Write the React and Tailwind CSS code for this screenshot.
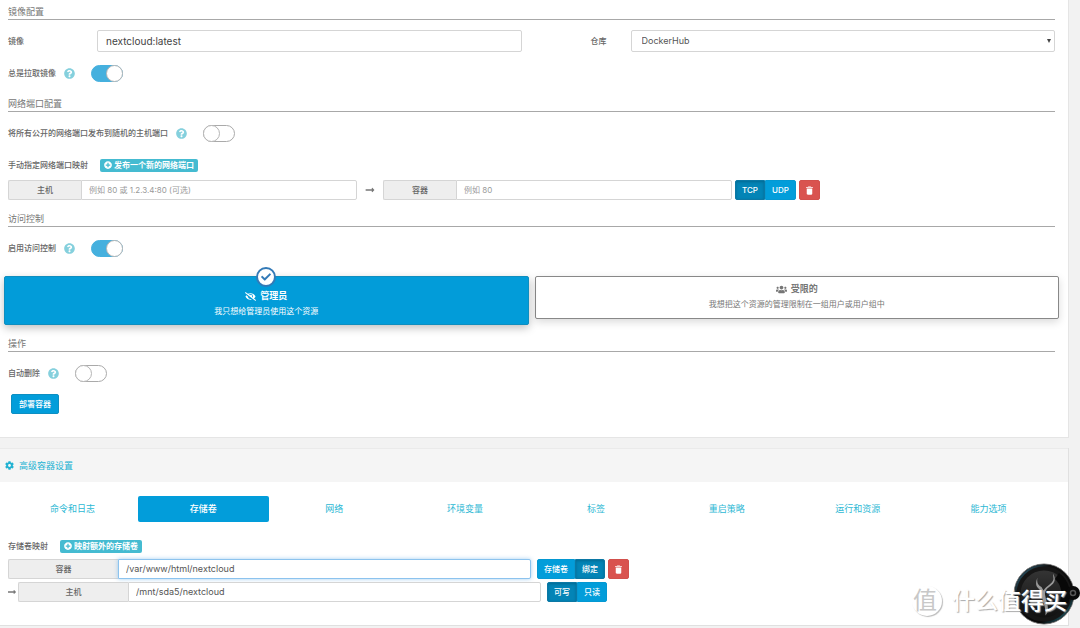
import React from "react";
import { FaCheck, FaCog, FaEyeSlash, FaLongArrowAltRight, FaPlusCircle, FaQuestionCircle, FaUsers } from "react-icons/fa";
import { IoMdTrash } from "react-icons/io";

const tabs = ["命令和日志", "存储卷", "网络", "环境变量", "标签", "重启策略", "运行和资源", "能力选项"];

const SectionTitle = ({ children, className = "" }) => (
  <h2 className={`border-b border-[#a8a8a8] pt-[5px] text-[9px] leading-[14px] text-[#767676] ${className}`}>
    {children}
  </h2>
);

const SwitchRow = ({ id, label, checked }) => (
  <div className="mt-3 flex h-[18px] items-center">
    <label htmlFor={id} className="text-[8px] font-medium text-[#666]">{label}</label>
    <FaQuestionCircle className="ml-2 h-[11px] w-[11px] text-[#85d0dd]" />
    <input
      id={id}
      type="checkbox"
      defaultChecked={checked}
      className="ml-4 flex h-[17px] w-8 appearance-none rounded-full border border-[#aaa] bg-white before:-my-px before:-ml-px before:block before:h-[17px] before:w-[17px] before:rounded-full before:border before:border-[#b5b5b5] before:bg-white checked:justify-end checked:border-[#45b0de] checked:bg-[#45b0de] checked:before:-mr-px"
    />
  </div>
);

const InputGroup = ({ id, label, addonClass, className, active, ...props }) => (
  <div className={`flex h-5 ${className}`}>
    <label
      htmlFor={id}
      className={`flex shrink-0 items-center justify-center rounded-l-[2px] border border-r-0 border-[#d5d5d5] bg-[#eee] text-[8px] font-medium text-[#666] ${addonClass}`}
    >
      {label}
    </label>
    <input
      id={id}
      type="text"
      autoFocus={active}
      className={`min-w-0 flex-1 rounded-r-[2px] border bg-white px-[7px] text-[#555] outline-none placeholder:text-[#999] ${
        active ? "border-[#8cc3ee] shadow-[0_0_4px_rgba(102,175,233,0.6)]" : "border-[#d5d5d5]"
      }`}
      {...props}
    />
  </div>
);

const ButtonGroup = ({ items, selected, className = "" }) => (
  <div className={`flex h-5 text-[8px] font-medium text-white ${className}`}>
    {items.map((item) => (
      <button
        key={item}
        type="button"
        className={`border px-[6px] first:rounded-l-[2px] last:rounded-r-[2px] ${
          item === selected
            ? "border-[#0b78a5] bg-[#0384b6] shadow-[inset_0_1px_3px_rgba(0,0,0,0.2)]"
            : "border-[#0498d2] bg-[#029dda]"
        }`}
      >
        {item}
      </button>
    ))}
  </div>
);

const TrashButton = () => (
  <button
    type="button"
    aria-label="删除"
    className="ml-[3px] flex h-5 w-[21px] items-center justify-center rounded-[2px] border border-[#d2504c] bg-[#d9534f] text-white"
  >
    <IoMdTrash className="h-[11px] w-[11px]" />
  </button>
);

const AddBadge = ({ children }) => (
  <button type="button" className="ml-3 flex h-[13px] items-center gap-[2px] rounded-[2px] bg-[#45bbd1] px-1 text-[8px] font-bold text-white">
    <FaPlusCircle className="h-2 w-2" />
    {children}
  </button>
);

const Watermark = () => (
  <div className="pointer-events-none absolute right-0 bottom-0 h-[68px] w-[170px] overflow-hidden">
    <svg className="absolute inset-0" width="170" height="68" viewBox="0 0 170 68">
      <defs>
        <linearGradient id="rim" x1="0" y1="0" x2="1" y2="1">
          <stop offset="0" stopColor="#34738f" />
          <stop offset="0.3" stopColor="#111" />
          <stop offset="0.72" stopColor="#080808" />
          <stop offset="1" stopColor="#2b8294" />
        </linearGradient>
        <linearGradient id="disc" x1="0" y1="0" x2="0" y2="1">
          <stop offset="0" stopColor="#343434" />
          <stop offset="1" stopColor="#111" />
        </linearGradient>
      </defs>
      <circle cx="134" cy="34" r="30" fill="#161616" stroke="#777" strokeWidth="1" />
      <circle cx="134" cy="34" r="28.5" fill="none" stroke="url(#rim)" strokeWidth="2" />
      <circle cx="134" cy="34" r="23.5" fill="url(#disc)" />
      <path d="M149 13a26 26 0 0 1 9 31l-8-3a20 20 0 0 0-5-22z" fill="#080808" />
      <path
        d="M127.5 17.5c-1 5 .5 7.500 4 9.500l2 3.500c3-5 9-6.500 10-11.500l-.5-5.500c3.500 6 1.500 9.500-2.500 12.500-4 2.500-5.500 5-5.500 8.500 1 6 3 10 3 14.500 0 2.500-1 4.500-2.500 6.500.5-8-2.500-13-3.500-18.500 0-5-2-7-4-9-2.500-2.500-2.500-6-.5-10.500z"
        fill="#999"
      />
      <circle cx="163" cy="33" r="7" fill="#090909" />
      <circle cx="163" cy="33" r="2.500" fill="none" stroke="#555" strokeWidth="1.500" />
    </svg>
    <div className="absolute top-[26px] left-[2px] flex items-center gap-[10px] text-white">
      <span className="flex h-[30px] w-[30px] items-center justify-center rounded-full pr-1 text-[24px] leading-none text-[#c8c8c8] shadow-[1px_1px_1px_#bbb]">
        值
      </span>
      <span className="text-[23px] leading-[30px] font-medium whitespace-nowrap [text-shadow:1px_1px_1px_#aaa]">什么值得买</span>
    </div>
  </div>
);

const App = () => {
  return (
    <main className="relative min-h-screen bg-[#f2f2f2] pr-[11px] font-['Inter','Noto_Sans_CJK_SC',sans-serif] text-[9px]">

      {/* container form */}
      <form className="border-r border-b border-[#e5e5e5] bg-white pr-[13px] pb-[23px] pl-2">
        <SectionTitle>镜像配置</SectionTitle>
        <div className="mt-[10px] grid h-[22px] grid-cols-[89px_5fr_109px_5fr] items-center">
          <label htmlFor="image" className="text-[8px] font-medium text-[#666]">镜像</label>
          <input
            id="image"
            type="text"
            defaultValue="nextcloud:latest"
            className="h-full min-w-0 rounded-[2px] border border-[#d5d5d5] px-2 text-[10px] text-[#444]"
          />
          <label htmlFor="registry" className="pr-6 text-right text-[8px] font-medium text-[#666]">仓库</label>
          <div className="relative h-full">
            <select id="registry" className="h-full w-full appearance-none rounded-[2px] border border-[#d5d5d5] bg-white px-[10px] text-[#555]">
              <option>DockerHub</option>
            </select>
            <svg className="pointer-events-none absolute top-[9px] right-1 h-1 w-1" viewBox="0 0 4 4">
              <path d="M0 0h4L2 4z" fill="#444" />
            </svg>
          </div>
        </div>
        <SwitchRow id="pull" label="总是拉取镜像" checked />

        <SectionTitle className="mt-[10px]">网络端口配置</SectionTitle>
        <SwitchRow id="publish" label="将所有公开的网络端口发布到随机的主机端口" />
        <div className="mt-4 flex h-[14px] items-center">
          <span className="text-[8px] font-medium text-[#666]">手动指定网络端口映射</span>
          <AddBadge>发布一个新的网络端口</AddBadge>
        </div>
        <div className="mt-2 flex text-[8px]">
          <InputGroup id="host-port" label="主机" className="w-1/3" addonClass="w-[73px]" placeholder="例如 80 或 1.2.3.4:80 (可选)" />
          <span className="flex w-[26px] items-center justify-center text-[#777]">
            <FaLongArrowAltRight className="h-[10px] w-[10px]" />
          </span>
          <InputGroup id="container-port" label="容器" className="w-1/3" addonClass="w-[73px]" placeholder="例如 80" />
          <ButtonGroup className="ml-[3px]" items={["TCP", "UDP"]} selected="TCP" />
          <TrashButton />
        </div>

        <SectionTitle className="mt-[7px]">访问控制</SectionTitle>
        <SwitchRow id="access" label="启用访问控制" checked />
        <div className="-mx-1 mt-[19px] flex items-start gap-[6px] text-center">
          <button type="button" className="relative flex h-[49px] flex-1 flex-col items-center rounded-[2px] border border-[#0f8ebf] bg-[#029cd9] pt-3 text-white shadow-[0_3px_8px_rgba(0,0,0,0.25)]">
            <span className="absolute -top-[10px] flex h-5 w-5 items-center justify-center rounded-full border-2 border-[#337ab7] bg-white text-[#337ab7]">
              <FaCheck className="h-[10px] w-[10px]" />
            </span>
            <span className="flex items-center gap-1 leading-[14px] font-bold">
              <FaEyeSlash className="h-[11px] w-[11px]" />
              管理员
            </span>
            <span className="mt-px text-[8px] leading-[14px]">我只想给管理员使用这个资源</span>
          </button>
          <button type="button" className="flex h-[43px] flex-1 flex-col items-center rounded-[2px] border border-[#888] bg-white pt-[5px] text-[#767676] shadow-[0_3px_8px_rgba(0,0,0,0.15)]">
            <span className="flex items-center gap-1 leading-[14px] font-bold">
              <FaUsers className="h-[11px] w-[11px]" />
              受限的
            </span>
            <span className="mt-px text-[8px] leading-[14px]">我想把这个资源的管理限制在一组用户或用户组中</span>
          </button>
        </div>

        <SectionTitle className="mt-[7px]">操作</SectionTitle>
        <SwitchRow id="autoremove" label="自动删除" />
        <button type="button" className="mt-3 ml-[3px] block h-5 rounded-[2px] border border-[#0d8fc2] bg-[#029dda] px-[7px] text-[8px] font-medium text-white">
          部署容器
        </button>
      </form>

      {/* advanced settings */}
      <section className="mt-[10px] border-r border-b border-[#e0e0e0] bg-white">
        <h2 className="flex h-[34px] items-center gap-[5px] border-t border-[#eaeaea] bg-[#f5f5f5] pl-[5px] text-[9px] text-[#22b2d2]">
          <FaCog className="h-[9px] w-[9px]" />
          高级容器设置
        </h2>
        <div className="pt-[14px] pr-[14px] pb-[23px] pl-[7px]">
          <nav className="grid h-[26px] grid-cols-8">
            {tabs.map((tab) => (
              <a
                key={tab}
                href="#"
                className={`flex items-center justify-center rounded-[2px] ${
                  tab === "存储卷" ? "bg-[#029dda] font-medium text-white" : "text-[#2cb8d4]"
                }`}
              >
                {tab}
              </a>
            ))}
          </nav>
          <div className="pl-px">
            <div className="mt-[17px] flex h-[14px] items-center">
              <span className="text-[8px] font-medium text-[#666]">存储卷映射</span>
              <AddBadge>映射额外的存储卷</AddBadge>
            </div>
            <div className="mt-[6px] flex">
              <InputGroup id="volume-container" label="容器" className="w-1/2" addonClass="w-[110px]" defaultValue="/var/www/html/nextcloud" active />
              <ButtonGroup className="ml-[6px]" items={["存储卷", "绑定"]} selected="绑定" />
              <TrashButton />
            </div>
            <div className="mt-[3px] flex">
              <span className="flex w-[10px] items-center text-[#777]">
                <FaLongArrowAltRight className="h-[10px] w-2" />
              </span>
              <InputGroup id="volume-host" label="主机" className="w-1/2" addonClass="w-[110px]" defaultValue="/mnt/sda5/nextcloud" />
              <ButtonGroup className="ml-[6px]" items={["可写", "只读"]} selected="可写" />
            </div>
          </div>
        </div>
      </section>

      <Watermark />
    </main>
  );
};

export default App;
